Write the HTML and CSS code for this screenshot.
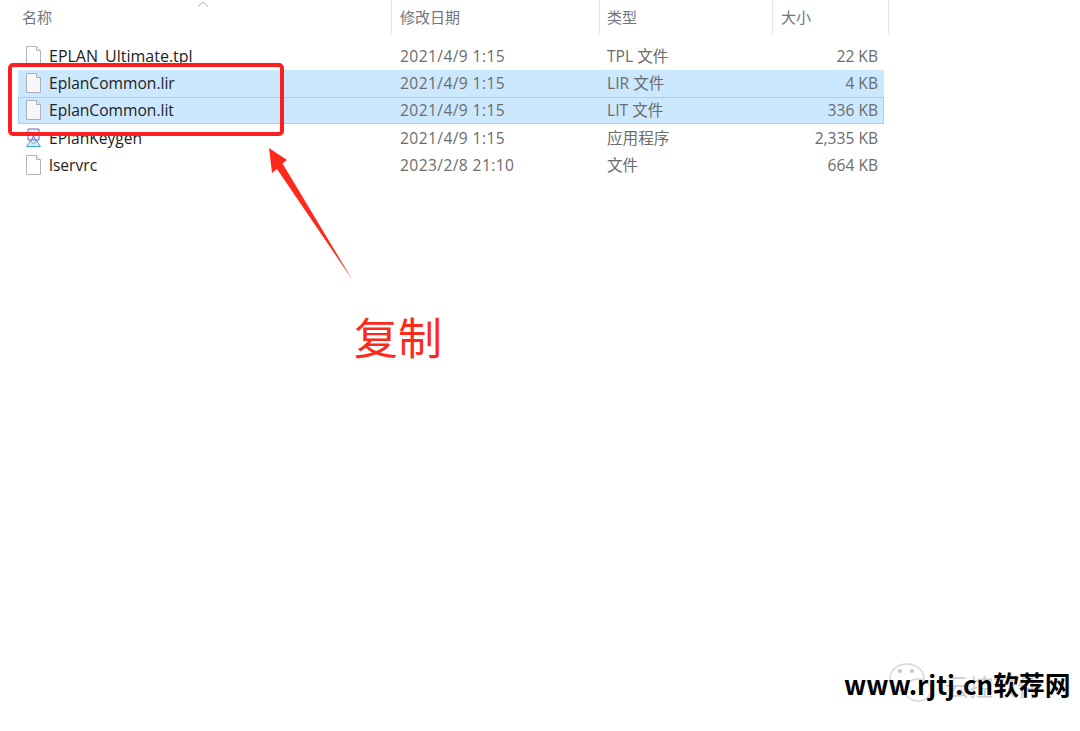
FILE: index.html
```html
<!DOCTYPE html>
<html lang="en">
<head>
    <meta charset="UTF-8">
    <meta name="viewport" content="width=device-width, initial-scale=1.0">
    <title>文件列表</title>
    <link rel="stylesheet" href="styles.css">
</head>
<body>
    <div class="explorer">
        <div class="header">
            <div class="head-cell col-name">名称
                <svg class="sort-arrow" width="12" height="6" viewBox="0 0 12 6"><path d="M1 5.5 L6 1 L11 5.5" fill="none" stroke="#a8a8a8" stroke-width="1"/></svg>
            </div>
            <div class="head-cell col-date">修改日期</div>
            <div class="head-cell col-type">类型</div>
            <div class="head-cell col-size">大小</div>
        </div>
        <div class="rows">
            <div class="row">
                <div class="col-name file-name">
                    <svg class="file-icon" width="15" height="20" viewBox="0 0 15 20"><path d="M0.5 0.5 H10.500 L14.500 4.500 V19.500 H0.500 Z" fill="#fff" stroke="#b4b4b4"/><path d="M10.500 0.500 V4.500 H14.500" fill="#f0f0f0" stroke="#b4b4b4"/></svg>
                    <span class="long-name">EPLAN_Ultimate.tpl</span>
                </div>
                <div class="col-date">2021/4/9 1:15</div>
                <div class="col-type">TPL 文件</div>
                <div class="col-size">22 KB</div>
            </div>
            <div class="row selected">
                <div class="col-name file-name">
                    <svg class="file-icon" width="15" height="20" viewBox="0 0 15 20"><path d="M0.5 0.5 H10.500 L14.500 4.500 V19.500 H0.500 Z" fill="#f7f7f7" stroke="#a9b0b6"/><path d="M10.500 0.500 V4.500 H14.500" fill="#e8e8e8" stroke="#a9b0b6"/></svg>
                    <span>EplanCommon.lir</span>
                </div>
                <div class="col-date">2021/4/9 1:15</div>
                <div class="col-type">LIR 文件</div>
                <div class="col-size">4 KB</div>
            </div>
            <div class="row selected outlined">
                <div class="col-name file-name">
                    <svg class="file-icon" width="15" height="20" viewBox="0 0 15 20"><path d="M0.5 0.5 H10.500 L14.500 4.500 V19.500 H0.500 Z" fill="#f7f7f7" stroke="#a9b0b6"/><path d="M10.500 0.500 V4.500 H14.500" fill="#e8e8e8" stroke="#a9b0b6"/></svg>
                    <span>EplanCommon.lit</span>
                </div>
                <div class="col-date">2021/4/9 1:15</div>
                <div class="col-type">LIT 文件</div>
                <div class="col-size">336 KB</div>
            </div>
            <div class="row">
                <div class="col-name file-name">
                    <svg class="file-icon" width="15" height="20" viewBox="0 0 15 20"><path d="M2 1 H13 V12 H2 Z" fill="#eef0fb" stroke="#6f6fb0"/><path d="M4 4 L11 14 M11 4 L4 14" stroke="#5a6fc0" fill="none"/><path d="M0.500 18.500 L4.500 13 L7.500 16 L10.500 13 L14.500 18.500 Z" fill="#d5ecf7" stroke="#3aa4d8"/></svg>
                    <span>EPlanKeygen</span>
                </div>
                <div class="col-date">2021/4/9 1:15</div>
                <div class="col-type">应用程序</div>
                <div class="col-size">2,335 KB</div>
            </div>
            <div class="row">
                <div class="col-name file-name">
                    <svg class="file-icon" width="15" height="20" viewBox="0 0 15 20"><path d="M0.5 0.5 H10.500 L14.500 4.500 V19.500 H0.500 Z" fill="#fff" stroke="#b4b4b4"/><path d="M10.500 0.500 V4.500 H14.500" fill="#f0f0f0" stroke="#b4b4b4"/></svg>
                    <span>lservrc</span>
                </div>
                <div class="col-date">2023/2/8 21:10</div>
                <div class="col-type">文件</div>
                <div class="col-size">664 KB</div>
            </div>
        </div>
    </div>

    <!-- annotations on top of the screenshot -->
    <div class="red-box"></div>
    <svg class="red-arrow" width="90" height="140" viewBox="0 0 90 140">
        <path d="M1 1 L19 13 L14.500 16.500 L84.500 133 L9 22 L4 26 Z" fill="#fd2a1c"/>
    </svg>
    <div class="copy-label">复制</div>

    <svg class="wechat-mark" width="56" height="50" viewBox="0 0 56 50">
        <ellipse cx="19" cy="16" rx="17" ry="14" fill="#fff" stroke="#d8d8d8" stroke-width="1.500"/>
        <ellipse cx="30" cy="28" rx="13" ry="11" fill="#fff" stroke="#d8d8d8" stroke-width="1.500"/>
        <circle cx="12" cy="9" r="2" fill="#c4c4c4"/>
        <circle cx="24" cy="9" r="2" fill="#c4c4c4"/>
    </svg>
    <div class="faded-name">云控软件</div>
    <div class="watermark">www.rjtj.cn软荐网</div>
</body>
</html>
```

FILE: styles.css
```css
body {
    margin: 0;
    height: 731px;
    overflow: hidden;
    background-color: #fff;
    font-family: "Open Sans", "Noto Sans CJK SC", sans-serif;
    font-size: 15.600px;
    color: #6c6c6c;
}

.explorer {
    padding-left: 18px;
    width: 871px;
}

.header {
    display: flex;
    height: 34px;
    margin-left: -4px;
}

.head-cell {
    box-sizing: border-box;
    height: 34px;
    line-height: 35px;
    font-size: 15px;
    border-right: 1px solid #e5e5e5;
    color: #70757c;
}

.header .col-name {
    position: relative;
    width: 378px;
    padding-left: 8px;
}

.header .col-date {
    width: 208px;
    padding-left: 8px;
}

.header .col-type {
    width: 173px;
    padding-left: 7px;
}

.header .col-size {
    width: 116px;
    padding-left: 8px;
    text-align: left;
}

.sort-arrow {
    position: absolute;
    left: 183px;
    top: 1px;
}

.rows {
    padding-top: 8.300px;
    width: 866px;
}

.row {
    display: flex;
    box-sizing: border-box;
    height: 27.250px;
    line-height: 26px;
    align-items: center;
}

.row.selected {
    background-color: #cce8ff;
}

.row.outlined {
    outline: 1px solid #99d1ff;
    outline-offset: -1px;
}

.col-name {
    width: 374px;
}

.file-name {
    display: flex;
    align-items: center;
    gap: 8px;
    padding-left: 8px;
    box-sizing: border-box;
    font-size: 15.600px;
    color: #222;
}

.long-name {
    font-size: 16px;
}

.file-icon {
    flex-shrink: 0;
}

.rows .col-date {
    width: 207px;
    padding-left: 8px;
    box-sizing: border-box;
    letter-spacing: 0.400px;
}

.rows .col-type {
    width: 173px;
    padding-left: 8px;
    box-sizing: border-box;
}

.rows .col-size {
    width: 106px;
    text-align: right;
}

.red-box {
    position: absolute;
    left: 8px;
    top: 63px;
    width: 276px;
    height: 73px;
    box-sizing: border-box;
    border: 4px solid #fd1f1f;
    border-radius: 5px;
}

.red-arrow {
    position: absolute;
    left: 268px;
    top: 147px;
}

.copy-label {
    position: absolute;
    left: 354px;
    top: 305px;
    font-family: "Noto Sans CJK SC", sans-serif;
    font-size: 44px;
    line-height: 62px;
    color: #fd2a1c;
}

.wechat-mark {
    position: absolute;
    left: 888px;
    top: 662px;
}

.faded-name {
    position: absolute;
    left: 945px;
    top: 668px;
    font-family: "Noto Sans CJK SC", sans-serif;
    font-size: 24px;
    color: #cfcfcf;
}

.watermark {
    position: absolute;
    left: 844px;
    top: 665px;
    font-family: "Noto Sans CJK SC", sans-serif;
    font-size: 25.800px;
    line-height: 38px;
    font-weight: 700;
    color: #000;
    white-space: nowrap;
}
```
